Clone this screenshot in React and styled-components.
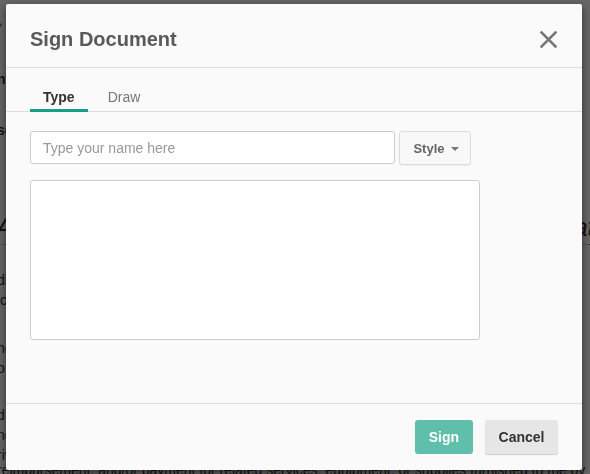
import React from "react";
import styled, { createGlobalStyle } from "styled-components";

const Global = createGlobalStyle`
  html, body { margin: 0; padding: 0; }
  body {
    width: 590px;
    height: 474px;
    overflow: hidden;
    background: #ffffff;
    font-family: "Liberation Sans", Arial, sans-serif;
  }
`;

/* ---------- background page (dimmed) ---------- */
const Page = styled.div`
  width: 590px;
  height: 474px;
  overflow: hidden;
  padding-top: 17px;
  box-sizing: border-box;
  color: #333;
  font-size: 14px;
`;

const PageLine = styled.div`
  white-space: nowrap;
  margin-left: -3px;
  line-height: 20px;
  margin-top: ${(p) => p.$mt || 0}px;
  font-weight: ${(p) => (p.$bold ? 700 : 400)};
  color: ${(p) => p.$color || "#333"};
`;

const PageHeading = styled.div`
  white-space: nowrap;
  margin-left: -4px;
  margin-top: ${(p) => p.$mt || 0}px;
  font-size: 26px;
  font-style: italic;
  line-height: 30px;
  border-bottom: 1px dotted #999;
  padding-bottom: 2px;
`;

const Overlay = styled.div`
  position: fixed;
  inset: 0;
  background: rgba(0, 0, 0, 0.6);
`;

/* ---------- modal ---------- */
const Modal = styled.div`
  position: fixed;
  top: 4px;
  left: 6px;
  width: 576px;
  height: 466px;
  background: #fafafa;
  border-radius: 2px;
  box-shadow: 0 3px 10px rgba(0, 0, 0, 0.55);
  display: flex;
  flex-direction: column;
  box-sizing: border-box;
`;

const Header = styled.div`
  display: flex;
  align-items: center;
  justify-content: space-between;
  padding: 23px 24px 16px 24px;
  border-bottom: 1px solid #dddddd;
`;

const Title = styled.h4`
  margin: 0;
  font-size: 20px;
  line-height: 24px;
  font-weight: 700;
  color: #595959;
`;

const CloseButton = styled.button`
  border: 0;
  background: none;
  padding: 0;
  margin-right: 1px;
  width: 17px;
  height: 17px;
  display: flex;
  cursor: pointer;
`;

const TabBar = styled.div`
  display: flex;
  gap: 7px;
  padding: 13px 24px 0 24px;
  border-bottom: 1px solid #dddddd;
`;

const Tab = styled.div`
  padding: 8px 13px 4px 13px;
  margin-bottom: -1px;
  font-size: 14px;
  line-height: 16px;
  font-weight: ${(p) => (p.$active ? 700 : 400)};
  color: ${(p) => (p.$active ? "#333333" : "#777777")};
  border-bottom: 3px solid ${(p) => (p.$active ? "#17a085" : "transparent")};
`;

const Body = styled.div`
  flex: 1;
  padding: 19px 24px 0 24px;
  display: flex;
  flex-direction: column;
  gap: 15px;
`;

const InputRow = styled.div`
  display: flex;
  gap: 4px;
  align-items: flex-start;
`;

const NameInput = styled.input`
  width: 365px;
  height: 33px;
  box-sizing: border-box;
  border: 1px solid #cccccc;
  border-radius: 3px;
  background: #ffffff;
  padding: 0 12px;
  font-family: "Liberation Sans", Arial, sans-serif;
  font-size: 14px;
  color: #333;
  outline: none;
  &::placeholder { color: #999999; }
`;

const StyleButton = styled.button`
  width: 72px;
  height: 34px;
  box-sizing: border-box;
  border: 1px solid #dddddd;
  border-radius: 3px;
  background: #f8f8f8;
  box-shadow: 0 1px 1px rgba(0, 0, 0, 0.06);
  font-family: "Liberation Sans", Arial, sans-serif;
  font-size: 13px;
  font-weight: 700;
  color: #666666;
  display: flex;
  align-items: center;
  justify-content: center;
  gap: 6px;
  padding: 0 0 0 2px;
`;

const Caret = styled.span`
  width: 0;
  height: 0;
  border-left: 4px solid transparent;
  border-right: 4px solid transparent;
  border-top: 4px solid #777;
  margin-top: 1px;
`;

const SignatureBox = styled.div`
  width: 450px;
  height: 160px;
  box-sizing: border-box;
  border: 1px solid #cccccc;
  border-radius: 3px;
  background: #ffffff;
`;

const Footer = styled.div`
  display: flex;
  justify-content: flex-end;
  gap: 12px;
  padding: 16px 24px 16px 24px;
  border-top: 1px solid #dddddd;
`;

const Button = styled.button`
  height: 34px;
  box-sizing: border-box;
  border: 0;
  border-radius: 3px;
  padding: 0 ${(p) => (p.$primary ? 14 : 13.5)}px;
  font-family: "Liberation Sans", Arial, sans-serif;
  font-size: 14px;
  font-weight: 700;
  color: ${(p) => (p.$primary ? "#ffffff" : "#333333")};
  background: ${(p) => (p.$primary ? "#5fbfaa" : "#e6e6e6")};
  box-shadow: ${(p) =>
    p.$primary ? "none" : "0 1px 1px rgba(0,0,0,0.18)"};
  cursor: pointer;
`;

function CloseIcon() {
  return (
    <svg width="17" height="17" viewBox="0 0 17 17">
      <path
        d="M1.5 1.5 L15.5 15.5 M15.5 1.5 L1.5 15.5"
        stroke="#777777"
        strokeWidth="2.6"
        strokeLinecap="square"
        fill="none"
      />
    </svg>
  );
}

export default function App() {
  return (
    <>
      <Global />
      <Page>
        <PageLine $color="#a33">* Required fields are marked with an asterisk</PageLine>
        <PageLine $bold $mt={32}>nformation about the patient and the responsible party</PageLine>
        <PageLine $bold $mt={31}>sconsent and authorization for treatment and release</PageLine>
        <PageHeading $mt={72}>Authorization and Assignment of Benefits for the patient</PageHeading>
        <PageLine $mt={25}>direct payment of all medical benefits to the physician and the practice for services</PageLine>
        <PageLine>icensed providers, understanding that I remain financially responsible for charges that</PageLine>
        <PageLine $mt={28}>hereby authorize the release of any medical or other information necessary to process</PageLine>
        <PageLine>o the insurance carrier and request payment of government benefits either to myself or</PageLine>
        <PageLine $mt={27}>d that this authorization will remain in effect until revoked in writing, and that a copy of</PageLine>
        <PageLine>nd this form shall be considered as valid as the original document for all purposes</PageLine>
        <PageLine>rivate insurance benefits to be paid directly to the practice for services rendered,</PageLine>
        <PageLine $mt={-5}>reimbursement, and/or payment for related services, equipment, or supplies furnished to me ov</PageLine>
      </Page>
      <Overlay />
      <Modal role="dialog">
        <Header>
          <Title>Sign Document</Title>
          <CloseButton aria-label="Close">
            <CloseIcon />
          </CloseButton>
        </Header>
        <TabBar>
          <Tab $active>Type</Tab>
          <Tab>Draw</Tab>
        </TabBar>
        <Body>
          <InputRow>
            <NameInput placeholder="Type your name here" />
            <StyleButton>
              Style <Caret />
            </StyleButton>
          </InputRow>
          <SignatureBox />
        </Body>
        <Footer>
          <Button $primary>Sign</Button>
          <Button>Cancel</Button>
        </Footer>
      </Modal>
    </>
  );
}
